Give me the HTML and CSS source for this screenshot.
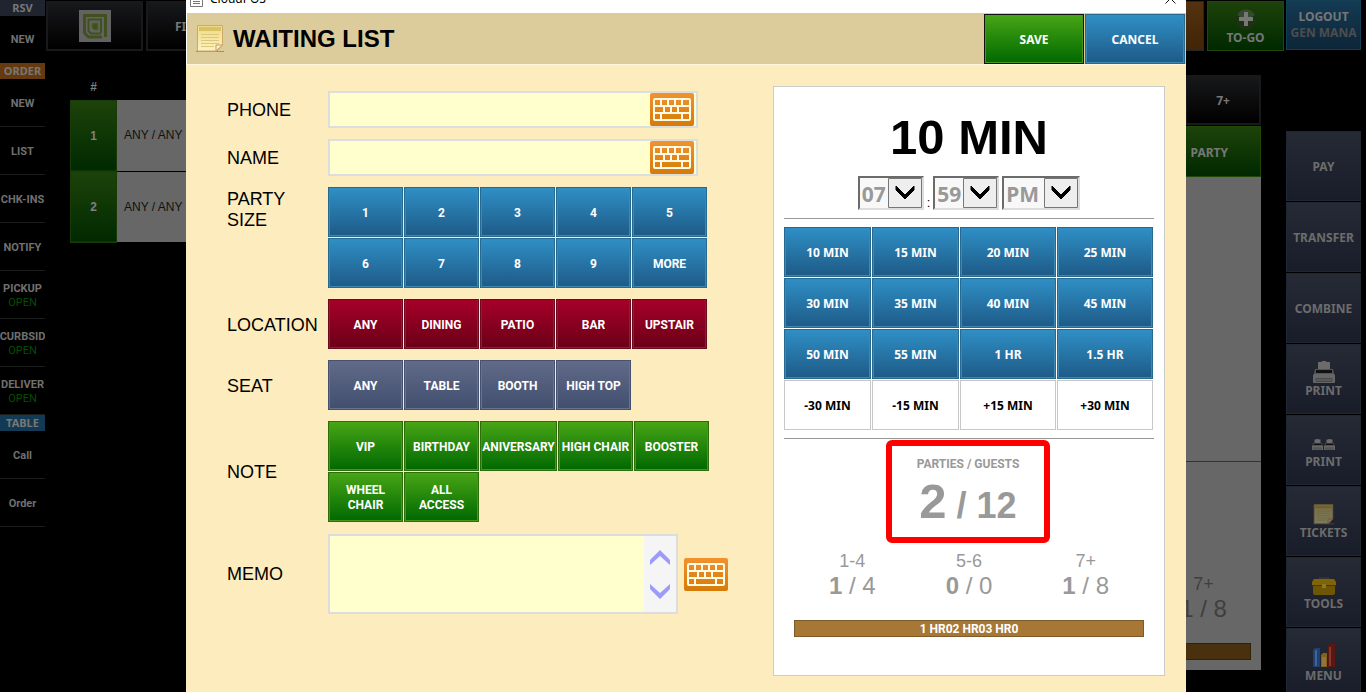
FILE: index.html
```html
<!DOCTYPE html>
<html lang="en">
<head>
<meta charset="utf-8">
<title>CloudPOS - Waiting List</title>
<link rel="stylesheet" href="styles.css">
</head>
<body>
<svg class="defs" width="0" height="0" aria-hidden="true">
  <defs>
    <linearGradient id="g-note" x1="0" y1="0" x2="0" y2="1"><stop offset="0" stop-color="#f0da84"/><stop offset="1" stop-color="#fbf3c4"/></linearGradient>
    <symbol id="keyboard" viewBox="0 0 44 33">
      <path fill="#fffbe6" fill-rule="evenodd" d="M5 5H39Q41 5 41 7V26Q41 28 39 28H5Q3 28 3 26V7Q3 5 5 5ZM5 7V12H10V7ZM12 7V12H17V7ZM19 7V12H24V7ZM26 7V12H31V7ZM33 7V12H39V7ZM5 14V19H13V14ZM15 14V19H20V14ZM22 14V19H27V14ZM29 14V19H39V14ZM5 21V26H10V21ZM12 21V26H31V21ZM33 21V26H39V21Z"/>
    </symbol>
    <symbol id="note" viewBox="0 0 28 28">
      <path d="M0 26.5H28" stroke="#a8905a" stroke-width="1"/>
      <path d="M1.500.5H26.500V20L21 26H1.500Z" fill="url(#g-note)" stroke="#cda968"/>
      <path d="M3 2H25V6H3Z" fill="#d9c266"/>
      <path d="M5 9.500H23M5 12.500H23M5 15.500H23M5 18.500H23M5 21.500H18" stroke="#ddc877"/>
      <path d="M20 26V20H26.500Z" fill="#fff3cf" stroke="#c49a58"/>
    </symbol>
    <symbol id="printer" viewBox="0 0 22 22">
      <path d="M5 9V1H8L9.500 0H12.500L14 1H17V9Z" fill="#6b6b6b"/>
      <path d="M2 8H20L21 13H1Z" fill="#555"/>
      <path d="M3 9H19V12H3Z" fill="#111"/>
      <path d="M1 13H21L22 14V21Q22 22 21 22H1Q0 22 0 21V14Z" fill="#666"/>
      <path d="M3 17.500H19V20.500H3Z" fill="#5a5a5a" stroke="#494949"/>
    </symbol>
  </defs>
</svg>

<div class="app">
  <nav class="side">
    <h2 class="side-head rsv">RSV</h2>
    <button class="side-item plain">NEW</button>
    <h2 class="side-head order">ORDER</h2>
    <button class="side-item">NEW</button>
    <button class="side-item">LIST</button>
    <button class="side-item">CHK-INS</button>
    <button class="side-item">NOTIFY</button>
    <button class="side-item">PICKUP<span class="open">OPEN</span></button>
    <button class="side-item">CURBSID<span class="open">OPEN</span></button>
    <button class="side-item">DELIVER<span class="open">OPEN</span></button>
    <h2 class="side-head table">TABLE</h2>
    <button class="side-item">Call</button>
    <button class="side-item">Order</button>
  </nav>

  <main class="main">
    <div class="topbar">
      <button class="dim black logo" aria-label="Home">
        <svg width="32" height="32" viewBox="0 0 32 32" fill="none">
          <path d="M0 0H32V32H0Z" fill="#626262"/>
          <path d="M26.500 27V5.500H5.500V23L9.500 27H23" stroke="#41501f" stroke-width="3"/>
          <path d="M22 23V9.500H9.500V21L12 23.500H22" stroke="#41501f" stroke-width="2"/>
          <path d="M13 13H19V20H15L13 18Z" fill="#41501f" stroke="#53622c"/>
        </svg>
      </button>
      <button class="dim black find">FI</button>
      <span class="spacer"></span>
      <button class="dim brown" aria-label="Bar"></button>
      <button class="dim green togo">
        <svg width="22" height="22" viewBox="0 0 22 22"><circle cx="11" cy="11" r="10.500" fill="#1d3212"/><path d="M2 7A10 10 0 0 1 20 7Q11 14 2 7" fill="#344b29"/><path d="M9 4H13V9H18V13H13V18H9V13H4V9H9Z" fill="#777"/></svg>
        TO-GO
      </button>
    </div>
    <div class="board">
      <table class="queue">
        <thead><tr><th>#</th><td></td></tr></thead>
        <tbody>
          <tr><th>1</th><td>ANY / ANY</td></tr>
          <tr><th>2</th><td>ANY / ANY</td></tr>
        </tbody>
      </table>
      <section class="back-panel">
        <button class="dim black seven">7+</button>
        <button class="dim green party">PARTY</button>
        <div class="back-sheet">
          <div class="back-upper"></div>
          <div class="back-stat"><span class="range">7+</span><span class="count">1 / 8</span></div>
          <div class="back-bar"></div>
        </div>
      </section>
    </div>
  </main>

  <aside class="rail">
    <button class="dim blue logout">LOGOUT<span>GEN MANA</span></button>
    <div class="rail-list">
      <button class="dim slate">PAY</button>
      <button class="dim slate">TRANSFER</button>
      <button class="dim slate">COMBINE</button>
      <button class="dim slate"><svg width="22" height="22"><use href="#printer"/></svg>PRINT</button>
      <button class="dim slate"><svg width="24" height="22" viewBox="0 0 24 22"><use href="#printer" y="7" width="11" height="11"/><use href="#printer" x="12" y="7" width="11" height="11"/></svg>PRINT</button>
      <button class="dim slate"><svg class="shade" width="21" height="21"><use href="#note"/></svg>TICKETS</button>
      <button class="dim slate"><svg width="24" height="22" viewBox="0 0 24 22"><path d="M8 6V4H16V6" fill="none" stroke="#333" stroke-width="2"/><path d="M2 5H22L24 8V12H0V8Z" fill="#806408"/><path d="M1 12H23V19Q23 21 21 21H3Q1 21 1 19Z" fill="#6f5605"/><path d="M0 11.500H24" stroke="#493804"/><path d="M10 10H14V14H10Z" fill="#8c7628"/></svg>TOOLS</button>
      <button class="dim slate"><svg width="22" height="24" viewBox="0 0 22 24"><path d="M0 6L2 4H7V23H0Z" fill="#203f72"/><path d="M2 6H4V22H2Z" fill="#426597"/><path d="M8 11L10 9H14V23H8Z" fill="#80611d"/><path d="M9 13H13V22H9Z" fill="#94743a"/><path d="M15 2L17 0H22V23H15Z" fill="#5b1711"/><path d="M16 3H18V22H16Z" fill="#803a2e"/></svg>MENU</button>
    </div>
  </aside>
</div>

<div class="dialog" role="dialog" aria-label="Waiting list">
  <div class="titlebar">
    <svg width="13" height="16" viewBox="0 0 13 16"><path d="M.5.500H12.500V15.500H.5Z" fill="#fff" stroke="#777"/><path d="M3 4.500H10M3 7.500H10M3 10.500H10M3 12.500H10" stroke="#4a7fb0"/></svg>
    <span>CloudPOS</span>
    <button class="close" aria-label="Close"><svg width="11" height="11" viewBox="0 0 11 11"><path d="M.5.500L10.500 10.500M10.500.500L.5 10.500" stroke="#111"/></svg></button>
  </div>
  <header class="head">
    <svg width="28" height="28"><use href="#note"/></svg>
    <h1>WAITING LIST</h1>
    <button class="btn green head-btn save">SAVE</button>
    <button class="btn blue head-btn">CANCEL</button>
  </header>
  <div class="body">
    <form class="form">
      <label for="phone">PHONE</label>
      <div class="field"><input id="phone" type="text"><button type="button" class="kbd" aria-label="Phone keyboard"><svg width="44" height="33"><use href="#keyboard"/></svg></button></div>

      <label for="name">NAME</label>
      <div class="field"><input id="name" type="text"><button type="button" class="kbd" aria-label="Name keyboard"><svg width="44" height="33"><use href="#keyboard"/></svg></button></div>

      <span class="label top" id="l-size">PARTY SIZE</span>
      <div class="keys" role="group" aria-labelledby="l-size">
        <button type="button" class="btn blue">1</button><button type="button" class="btn blue">2</button><button type="button" class="btn blue">3</button><button type="button" class="btn blue">4</button><button type="button" class="btn blue">5</button>
        <button type="button" class="btn blue">6</button><button type="button" class="btn blue">7</button><button type="button" class="btn blue">8</button><button type="button" class="btn blue">9</button><button type="button" class="btn blue">MORE</button>
      </div>

      <span class="label" id="l-loc">LOCATION</span>
      <div class="keys" role="group" aria-labelledby="l-loc">
        <button type="button" class="btn red">ANY</button><button type="button" class="btn red">DINING</button><button type="button" class="btn red">PATIO</button><button type="button" class="btn red">BAR</button><button type="button" class="btn red">UPSTAIR</button>
      </div>

      <span class="label" id="l-seat">SEAT</span>
      <div class="keys" role="group" aria-labelledby="l-seat">
        <button type="button" class="btn slate">ANY</button><button type="button" class="btn slate">TABLE</button><button type="button" class="btn slate">BOOTH</button><button type="button" class="btn slate">HIGH TOP</button>
      </div>

      <span class="label" id="l-note">NOTE</span>
      <div class="keys" role="group" aria-labelledby="l-note">
        <button type="button" class="btn green">VIP</button><button type="button" class="btn green">BIRTHDAY</button><button type="button" class="btn green wide">ANIVERSARY</button><button type="button" class="btn green">HIGH CHAIR</button><button type="button" class="btn green">BOOSTER</button>
        <button type="button" class="btn green">WHEEL<br>CHAIR</button><button type="button" class="btn green">ALL<br>ACCESS</button>
      </div>

      <label for="memo">MEMO</label>
      <div class="memo">
        <div class="memo-box">
          <textarea id="memo"></textarea>
          <div class="scroll">
            <button type="button" aria-label="Scroll up"><svg width="20" height="15" viewBox="0 0 20 15"><path d="M10 0L20 10V15L10 6L0 15V10Z" fill="#9d9bfa"/></svg></button>
            <button type="button" aria-label="Scroll down"><svg width="20" height="15" viewBox="0 0 20 15"><path d="M10 15L20 5V0L10 9L0 0V5Z" fill="#9d9bfa"/></svg></button>
          </div>
        </div>
        <button type="button" class="kbd" aria-label="Memo keyboard"><svg width="44" height="33"><use href="#keyboard"/></svg></button>
      </div>
    </form>

    <section class="panel">
      <div class="quote">10 MIN</div>
      <div class="time">
        <span class="pick"><select aria-label="Hour"><option>07</option></select><svg width="34" height="30" viewBox="0 0 34 30"><path d="M.5.500H33.500V29.500H.5Z" fill="#eee" stroke="#777"/><path d="M8 8L17 17L26 8V12L17 21L8 12Z" fill="#000" stroke="#000"/></svg></span>
        <span class="colon">:</span>
        <span class="pick"><select aria-label="Minute"><option>59</option></select><svg width="34" height="30" viewBox="0 0 34 30"><path d="M.5.500H33.500V29.500H.5Z" fill="#eee" stroke="#777"/><path d="M8 8L17 17L26 8V12L17 21L8 12Z" fill="#000" stroke="#000"/></svg></span>
        <span class="pick ampm"><select aria-label="AM or PM"><option>PM</option></select><svg width="34" height="30" viewBox="0 0 34 30"><path d="M.5.500H33.500V29.500H.5Z" fill="#eee" stroke="#777"/><path d="M8 8L17 17L26 8V12L17 21L8 12Z" fill="#000" stroke="#000"/></svg></span>
      </div>
      <div class="minutes">
        <button class="btn blue">10 MIN</button><button class="btn blue">15 MIN</button><button class="btn blue">20 MIN</button><button class="btn blue">25 MIN</button>
        <button class="btn blue">30 MIN</button><button class="btn blue">35 MIN</button><button class="btn blue">40 MIN</button><button class="btn blue">45 MIN</button>
        <button class="btn blue">50 MIN</button><button class="btn blue">55 MIN</button><button class="btn blue">1 HR</button><button class="btn blue">1.5 HR</button>
        <button class="btn white">-30 MIN</button><button class="btn white">-15 MIN</button><button class="btn white">+15 MIN</button><button class="btn white">+30 MIN</button>
      </div>
      <div class="totals">
        <div class="totals-label">PARTIES / GUESTS</div>
        <div class="totals-value"><b>2</b> / 12</div>
      </div>
      <div class="stats">
        <div><span class="range">1-4</span><span class="count"><b>1</b> / 4</span></div>
        <div><span class="range">5-6</span><span class="count"><b>0</b> / 0</span></div>
        <div><span class="range">7+</span><span class="count"><b>1</b> / 8</span></div>
      </div>
      <div class="hours">1 HR02 HR03 HR0</div>
    </section>
  </div>
</div>
</body>
</html>
```

FILE: styles.css
```css
* { box-sizing: border-box; }
body {
  margin: 0;
  height: 100vh;
  overflow: hidden;
  position: relative;
  background: #000;
  font-family: "Liberation Sans", Arial, sans-serif;
}
button { font: inherit; padding: 0; margin: 0; border: 0; background: none; cursor: pointer; }
h1, h2 { margin: 0; }
svg { display: block; flex: none; }
.defs { position: absolute; }

/* Dimmed application behind the dialog */
.app { display: flex; height: 100%; padding-right: 5px; overflow: hidden; }
.side { width: 45px; flex: none; overflow: hidden; display: flex; flex-direction: column; }
.side-head {
  flex: none; height: 16px;
  font: bold 11px/16px "Noto Sans", sans-serif;
  color: #777; text-align: center;
}
.side-head.rsv { background: #20242f; }
.side-head.order { background: #653a0e; }
.side-head.table { background: #123a54; }
.side-item {
  flex: none; height: 48px;
  display: flex; flex-direction: column; align-items: center; justify-content: center;
  padding-top: 2px;
  font: bold 11px/14px Roboto, sans-serif;
  color: #707070;
  border-bottom: 1px solid #1c1c1c;
}
.side-item.plain { height: 47px; border-bottom-color: transparent; }
.open { color: #054d05; font-weight: normal; }

.main { flex: 1; min-width: 0; display: flex; flex-direction: column; margin: 0 2px 0 1px; }
.topbar { display: flex; gap: 3px; height: 51px; padding-top: 1px; }
.spacer { flex: 1; }
.dim {
  padding-top: 2px;
  font: bold 12px/16px "Noto Sans", sans-serif;
  color: #777;
  border: 1px solid #262626;
  display: flex; flex-direction: column; align-items: center; justify-content: center;
}
.dim.black { background: linear-gradient(#17181a, #000); border: 2px solid #17191a; }
.dim.green { background: linear-gradient(#1d420a, #002900); border-color: #1f4708; }
.dim.brown { width: 77px; background: linear-gradient(#543210, #402506); }
.dim.blue { background: linear-gradient(#133b53, #0d2538); border-color: #143e53; }
.dim.slate { background: linear-gradient(#262a35, #191d2a); border-color: #202732; color: #6c6c6c; }
.dim.logo { width: 97px; padding-top: 0; }
.find { width: 97px; align-items: flex-start; padding-left: 27px; }
.togo { width: 77px; }
.board { flex: 1; display: flex; justify-content: space-between; align-items: flex-start; padding: 24px 23px 0 24px; }
.queue { border-collapse: collapse; font-size: 12px; }
.queue th { width: 46px; padding: 0; color: #808080; }
.queue td { padding: 0 7px; color: #111; white-space: nowrap; }
.queue thead tr { height: 25px; }
.queue tbody tr { height: 71px; }
.queue tbody th { background: linear-gradient(#1d420a, #002900); border: 1px solid #193b07; }
.queue tbody td { background: #676767; border-bottom: 1px solid #000; }
.back-panel { width: 392px; display: flex; flex-direction: column; align-items: stretch; }
.seven { width: 76px; height: 50px; align-self: flex-end; }
.party { height: 51px; margin-top: 1px; align-items: flex-end; padding-right: 32px; }
.back-sheet { height: 493px; background: #676767; display: flex; flex-direction: column; }
.back-upper { height: 285px; border-bottom: 1px solid #333; }
.back-stat { align-self: flex-end; width: 115px; padding-top: 111px; text-align: center; color: #3f3f3f; }
.back-bar { margin: 20px 10px 0; height: 17px; background: #49310f; border: 1px solid #33220a; }
.range { display: block; font-size: 18px; line-height: 22px; }
.count { display: block; font-size: 24px; line-height: 28px; }

.rail { width: 75px; flex: none; }
.rail .dim { width: 100%; }
.dim.logout { height: 50px; padding-top: 0; }
.logout span { color: #4d4d4d; }
.rail-list { margin-top: 81px; display: flex; flex-direction: column; gap: 1px; }
.rail-list .dim { height: 70px; flex: none; }
.shade { filter: brightness(.5); }

/* Dialog window */
.dialog {
  position: absolute;
  inset: -18px 180px 0 186px;
  background: #fff;
  display: flex; flex-direction: column;
}
.titlebar {
  height: 31px; flex: none;
  display: flex; align-items: center; gap: 7px; padding: 2px 10px 0 4px;
  font: 12px/16px "Noto Sans", sans-serif;
}
.close { margin-left: auto; }
.head {
  flex: none; height: 52px;
  display: flex; align-items: center; gap: 1px;
  padding: 0 1px 0 9px; margin-left: 1px;
  background: #ddcc9b;
  border-bottom: 1px solid #fff6dc;
}
.head h1 { flex: 1; margin-left: 8px; font-size: 24px; line-height: 28px; }
.body {
  flex: 1;
  display: flex; justify-content: space-between; align-items: flex-start;
  padding: 21px 21px 0 41px;
  background: #fdecbd;
}
.form {
  display: grid;
  grid-template-columns: 90px 1fr;
  gap: 11px;
  padding-top: 5px;
  align-items: center;
  font-size: 18px; line-height: 21px;
}
.form label, .label { padding-top: 2px; }
.label.top { align-self: start; width: 70px; }
.field {
  display: flex; align-items: center;
  width: 370px; height: 37px;
  border: 2px solid #ddd; background: #ffffcd;
}
.field input { flex: 1; min-width: 0; height: 100%; border: 0; padding: 0 8px; background: none; font: inherit; outline: 0; }
.kbd { background: linear-gradient(#f1922e, #d67b06); border-radius: 2px; }
.field .kbd { margin-right: 2px; }
.keys { display: flex; flex-wrap: wrap; gap: 1px; width: 382px; }

.btn {
  width: 75px; height: 50px;
  padding-top: 2px;
  font: bold 12px/15px Roboto, sans-serif;
  color: #fff;
  white-space: nowrap;
  border: 1px solid;
}
.btn.wide { width: 77px; }
.btn.blue { background: linear-gradient(#2f8fc5, #1e5a87); border-color: #27698f; box-shadow: inset -1px -1px #3b88b4, inset 1px 0 #3b88b4; }
.btn.green { background: linear-gradient(#47a516, #006800); border-color: #2f6d0b; box-shadow: inset -1px -1px #4a961c, inset 1px 0 #4a961c; }
.btn.red { background: linear-gradient(#a60028, #6b0017); border-color: #6b0a1e; box-shadow: inset -1px -1px #8f1c38, inset 1px 0 #8f1c38; }
.btn.slate { background: linear-gradient(#616b89, #414e6e); border-color: #465170; box-shadow: inset -1px -1px #68728c, inset 1px 0 #68728c; }
.btn.white { background: #fff; border-color: #c8c8c8; color: #000; }
.btn.head-btn { width: 100px; font: bold 12px/16px "Noto Sans", sans-serif; }
.btn.save { border-color: #111; }

.memo { display: flex; align-items: center; gap: 6px; padding-top: 1px; }
.memo-box { display: flex; width: 350px; height: 80px; border: 2px solid #ddd; }
.memo textarea { flex: 1; min-width: 0; border: 0; resize: none; background: #ffffcd; font: inherit; outline: 0; }
.scroll { width: 32px; display: flex; flex-direction: column; align-items: center; justify-content: space-between; padding: 14px 0 13px; background: #f5f5f5; }

.panel {
  flex: none; width: 392px; height: 590px;
  background: #fff; border: 1px solid #ccc;
  padding: 0 10px;
}
.quote { padding-top: 22px; font-size: 49px; font-weight: bold; line-height: 56px; text-align: center; }
.time { display: flex; justify-content: center; gap: 3px; padding: 11px 0 8px; border-bottom: 1px solid #999; }
.pick { position: relative; width: 66px; height: 34px; border: 2px solid; border-color: #6b6b6b #ddd #ddd #6b6b6b; background: #f8f8f8; }
.pick.ampm { width: 78px; }
.pick select { appearance: none; width: 100%; height: 100%; border: 0; padding: 2px 0 0 2px; background: none; font: bold 21px/28px "Noto Sans", sans-serif; color: #999; }
.pick svg { position: absolute; top: 0; right: 0; pointer-events: none; }
.colon { align-self: flex-end; font-size: 13px; line-height: 15px; }
.minutes {
  display: grid; grid-template-columns: 87fr 87fr 96fr 96fr; gap: 1px;
  padding: 8px 1px 8px 0; border-bottom: 1px solid #999;
}
.minutes .btn { width: auto; font: bold 12px/16px "Noto Sans", sans-serif; }
.totals {
  width: 164px; height: 103px; margin: 1px auto 0 102px; padding-top: 10px;
  border: 6px solid #f00; border-radius: 6px;
  text-align: center; color: #999; font-weight: bold;
}
.totals-label { font: bold 12px/16px Roboto, sans-serif; }
.totals-value { font-size: 36px; line-height: 58px; }
.totals-value b { font-size: 49px; }
.stats { display: grid; grid-template-columns: repeat(3, 1fr); padding: 7px 10px 0; text-align: center; color: #999; }
.hours {
  margin: 20px 10px 0; height: 17px;
  background: #a77736; border: 1px solid #7d5a2a;
  font: bold 12px/16px Roboto, sans-serif; color: #fff; text-align: center;
}
```
